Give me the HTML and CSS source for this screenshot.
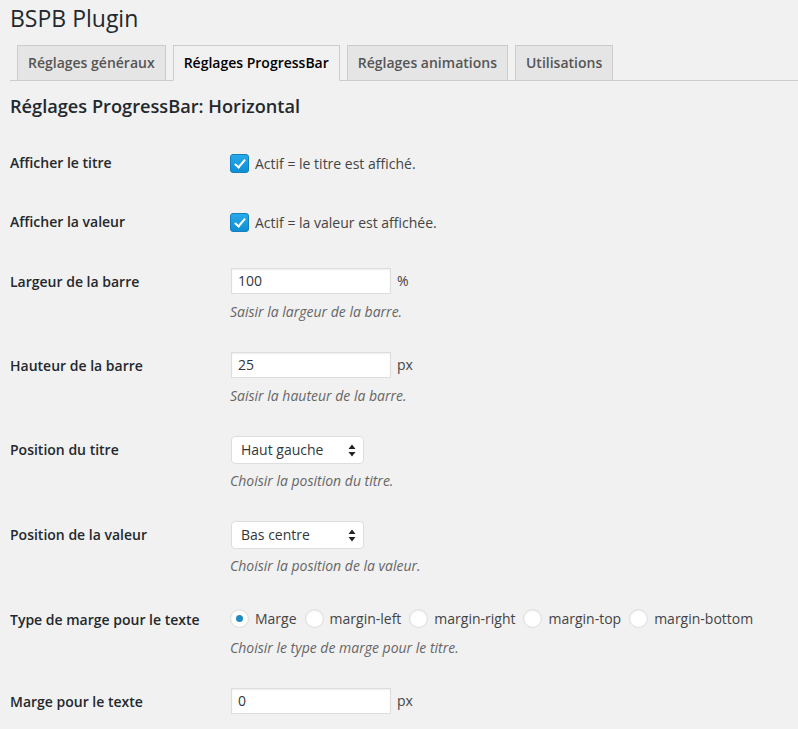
FILE: index.html
```html
<!DOCTYPE html>
<html lang="fr">
<head>
    <meta charset="UTF-8">
    <title>BSPB Plugin</title>
    <link rel="stylesheet" href="styles.css">
</head>
<body>
<div class="wrap">
    <h1 class="page-title">BSPB Plugin</h1>
    <nav class="nav-tabs">
        <a class="nav-tab">Réglages généraux</a>
        <a class="nav-tab active">Réglages ProgressBar</a>
        <a class="nav-tab">Réglages animations</a>
        <a class="nav-tab">Utilisations</a>
    </nav>
    <h2 class="section-title">Réglages ProgressBar: Horizontal</h2>
    <table class="form-table">
        <tr>
            <th>Afficher le titre</th>
            <td><label class="line line-check"><input type="checkbox" class="check" checked>Actif = le titre est affiché.</label></td>
        </tr>
        <tr>
            <th>Afficher la valeur</th>
            <td><label class="line line-check"><input type="checkbox" class="check" checked>Actif = la valeur est affichée.</label></td>
        </tr>
        <tr>
            <th>Largeur de la barre</th>
            <td>
                <div class="line"><input type="text" class="text-input" value="100"><span class="unit">%</span></div>
                <p class="description">Saisir la largeur de la barre.</p>
            </td>
        </tr>
        <tr>
            <th>Hauteur de la barre</th>
            <td>
                <div class="line"><input type="text" class="text-input" value="25"><span class="unit">px</span></div>
                <p class="description">Saisir la hauteur de la barre.</p>
            </td>
        </tr>
        <tr>
            <th>Position du titre</th>
            <td>
                <div class="line line-select">
                    <span class="select-box">
                        <select class="select"><option>Haut gauche</option></select>
                        <svg class="select-arrows" width="8" height="13" viewBox="0 0 8 13"><path d="M4 0.5L7.5 5H0.5Z M4 12.5L7.5 8H0.5Z" fill="#222"/></svg>
                    </span>
                </div>
                <p class="description desc-select">Choisir la position du titre.</p>
            </td>
        </tr>
        <tr>
            <th>Position de la valeur</th>
            <td>
                <div class="line line-select">
                    <span class="select-box">
                        <select class="select"><option>Bas centre</option></select>
                        <svg class="select-arrows" width="8" height="13" viewBox="0 0 8 13"><path d="M4 0.5L7.5 5H0.5Z M4 12.5L7.5 8H0.5Z" fill="#222"/></svg>
                    </span>
                </div>
                <p class="description desc-select">Choisir la position de la valeur.</p>
            </td>
        </tr>
        <tr>
            <th>Type de marge pour le texte</th>
            <td>
                <div class="line">
                    <label class="radio-label"><input type="radio" name="marge" class="radio" checked>Marge</label>
                    <label class="radio-label"><input type="radio" name="marge" class="radio">margin-left</label>
                    <label class="radio-label"><input type="radio" name="marge" class="radio">margin-right</label>
                    <label class="radio-label"><input type="radio" name="marge" class="radio">margin-top</label>
                    <label class="radio-label"><input type="radio" name="marge" class="radio">margin-bottom</label>
                </div>
                <p class="description desc-radio">Choisir le type de marge pour le titre.</p>
            </td>
        </tr>
        <tr>
            <th>Marge pour le texte</th>
            <td>
                <div class="line"><input type="text" class="text-input" value="0"><span class="unit">px</span></div>
            </td>
        </tr>
    </table>
</div>
</body>
</html>
```

FILE: styles.css
```css
body{
    margin: 0;
    background: #f1f1f1;
    color: #444;
    font-family: "Open Sans", "Noto Sans", sans-serif;
    font-size: 14px;
}
.wrap{
    padding-left: 10px;
}
.page-title{
    margin: 0;
    padding-top: 4px;
    font-size: 23px;
    line-height: 29px;
    font-weight: 400;
    color: #23282d;
}
.nav-tabs{
    display: flex;
    align-items: flex-end;
    margin-top: 12px;
    border-bottom: 1px solid #ccc;
}
.nav-tab{
    margin-left: 7px;
    margin-bottom: -1px;
    padding: 5px 10px;
    border: 1px solid #ccc;
    background: #e5e5e5;
    color: #555;
    font-size: 14px;
    line-height: 24px;
    font-weight: 600;
    cursor: pointer;
}
.nav-tab.active{
    background: #f1f1f1;
    border-bottom-color: #f1f1f1;
    color: #000;
}
.section-title{
    margin: 14px 0 15px;
    font-size: 18.2px;
    line-height: 1.3;
    font-weight: 600;
    color: #23282d;
}
.form-table{
    border-collapse: collapse;
    border-spacing: 0;
}
.form-table th{
    width: 200px;
    padding: 20px 10px 20px 0;
    text-align: left;
    vertical-align: top;
    font-size: 14px;
    line-height: 1.3;
    font-weight: 600;
    color: #23282d;
}
.form-table td{
    padding: 15px 10px;
    vertical-align: top;
}
.line{
    display: flex;
    align-items: center;
    height: 26px;
    white-space: nowrap;
}
.line-check{
    height: 29.5px;
}
.line-select{
    height: 28px;
}
.check{
    appearance: none;
    -webkit-appearance: none;
    position: relative;
    width: 19px;
    height: 19px;
    margin: 0 6px 0 0;
    border: 1px solid #1580bd;
    border-radius: 3px;
    background: linear-gradient(#27a9ea, #0e8fd4);
    flex-shrink: 0;
}
.check::before{
    content: "";
    position: absolute;
    left: 6px;
    top: 2px;
    width: 4px;
    height: 9px;
    border-right: 2px solid #fff;
    border-bottom: 2px solid #fff;
    transform: rotate(40deg);
}
.text-input{
    box-sizing: border-box;
    width: 160px;
    height: 26px;
    margin: 0 6px 0 1px;
    padding: 0 6px;
    border: 1px solid #ddd;
    background: #fff;
    box-shadow: inset 0 1px 2px rgba(0, 0, 0, 0.07);
    font-family: inherit;
    font-size: 14px;
    color: #32373c;
}
.unit{
    color: #444;
}
.select-box{
    position: relative;
    display: inline-block;
    margin-left: 1px;
}
.select{
    appearance: none;
    -webkit-appearance: none;
    box-sizing: border-box;
    width: 133px;
    height: 28px;
    padding: 0 0 0 9px;
    border: 1px solid #ddd;
    border-radius: 4px;
    background: #fff;
    font-family: inherit;
    font-size: 14px;
    color: #32373c;
}
.select-arrows{
    position: absolute;
    right: 8px;
    top: 8px;
    pointer-events: none;
}
.description{
    margin: 8px 0 0;
    font-size: 14px;
    line-height: 20px;
    font-style: italic;
    color: #666;
}
.desc-select{
    margin-top: 7px;
}
.desc-radio{
    margin-top: 6px;
}
.radio-label{
    display: inline-flex;
    align-items: center;
    margin-right: 8px;
}
.radio{
    appearance: none;
    -webkit-appearance: none;
    position: relative;
    box-sizing: border-box;
    width: 19px;
    height: 19px;
    margin: 0 6px 0 0;
    border: 1px solid #ddd;
    border-radius: 50%;
    background: #fff;
    box-shadow: inset 0 1px 2px rgba(0, 0, 0, 0.07);
}
.radio:checked::before{
    content: "";
    position: absolute;
    left: 5px;
    top: 5px;
    width: 7px;
    height: 7px;
    border-radius: 50%;
    background: #1e8cbe;
}
```
